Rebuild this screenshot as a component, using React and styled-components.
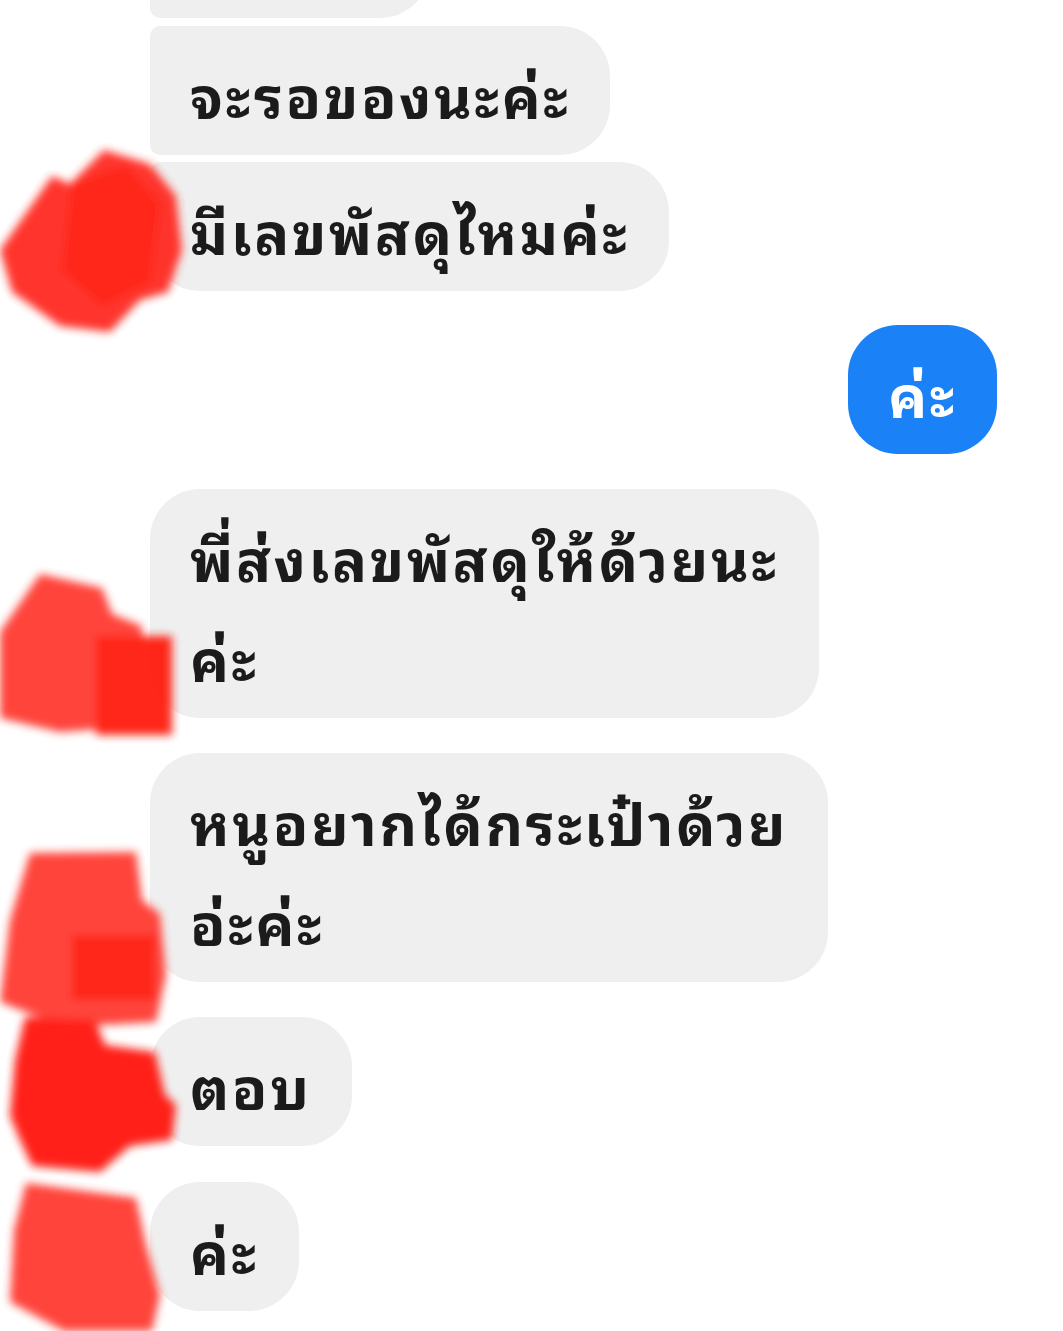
import React from "react";
import styled, { createGlobalStyle } from "styled-components";

const Global = createGlobalStyle`
    html, body {
        margin: 0;
        padding: 0;
        background: #ffffff;
    }
    body {
        font-family: "Noto Sans Thai Looped", "Noto Serif Thai", "Loma", "Garuda", "Tlwg Typo", "Sarabun", "Noto Sans Thai", "Noto Sans", sans-serif;
        overflow: hidden;
    }
`

const Screen = styled.div`
    position: relative;
    width: 1063px;
    height: 1331px;
    overflow: hidden;
    background: #ffffff;
`

const Feed = styled.div`
    display: flex;
    flex-direction: column;
    margin-top: -111px;
`

const Row = styled.div`
    display: flex;
    justify-content: ${p => p.mine ? "flex-end" : "flex-start"};
    padding-left: ${p => p.mine ? "0" : "150px"};
    padding-right: ${p => p.mine ? "66px" : "0"};
    margin-top: ${p => p.gap}px;
`

const Bubble = styled.div`
    box-sizing: border-box;
    min-height: 129px;
    min-width: ${p => p.w || 0}px;
    padding: 17px 40px 12px;
    border-radius: 50px;
    border-top-left-radius: ${p => p.tl || 50}px;
    border-bottom-left-radius: ${p => p.bl || 50}px;
    background: ${p => p.mine ? "#1a82f6" : "#efefef"};
    color: ${p => p.mine ? "#ffffff" : "#1b1b1b"};
    font-size: 58px;
    font-weight: 700;
    letter-spacing: 2.6px;
    line-height: 100px;
    white-space: nowrap;
`

const Line = styled.div``

const Redact = styled.svg`
    position: absolute;
    left: 0;
    top: 0;
    pointer-events: none;
`

const messages = [
    { lines: [""], gap: 0, w: 280, bl: 10 },
    { lines: ["จะรอของนะค่ะ"], gap: 8, tl: 10, bl: 10 },
    { lines: ["มีเลขพัสดุไหมค่ะ"], gap: 7, tl: 10 },
    { lines: ["ค่ะ"], gap: 34, mine: true },
    { lines: ["พี่ส่งเลขพัสดุให้ด้วยนะ", "ค่ะ"], gap: 35 },
    { lines: ["หนูอยากได้กระเป๋าด้วย", "อ่ะค่ะ"], gap: 35 },
    { lines: ["ตอบ"], gap: 35 },
    { lines: ["ค่ะ"], gap: 36 },
]

// red marker scribbles hiding the avatars
const blots = [
    { fill: "#ff2c24", pts: "0,250 52,176 70,184 104,150 150,164 176,196 182,250 168,292 140,300 110,332 60,326 12,292" },
    { fill: "#ff1a10", pts: "72,184 126,166 160,204 150,282 102,306 62,270" },
    { fill: "#ff3a30", pts: "0,632 40,574 102,588 112,614 142,626 142,726 60,732 0,718" },
    { fill: "#ff1a10", pts: "96,636 172,636 172,735 96,735" },
    { fill: "#ff3a30", pts: "30,853 136,852 142,900 160,914 166,975 156,1022 65,1027 0,1002 10,920" },
    { fill: "#ff1a10", pts: "72,935 155,935 155,1000 72,1000" },
    { fill: "#ff1408", pts: "25,1017 95,1020 105,1045 155,1052 165,1095 176,1105 172,1140 130,1146 100,1172 32,1166 20,1140 10,1116 15,1060" },
    { fill: "#ff3a30", pts: "26,1183 136,1198 146,1245 160,1295 152,1331 64,1331 10,1302 14,1230" },
]

export default function App () {
    return <Screen>
        <Global/>
        <Feed>
            {messages.map((m, i) => <Row key={i} mine={m.mine} gap={m.gap}>
                <Bubble mine={m.mine} w={m.w} tl={m.tl} bl={m.bl}>
                    {m.lines.map((l, j) => <Line key={j}>{l}</Line>)}
                </Bubble>
            </Row>)}
        </Feed>
        <Redact width="1063" height="1331" viewBox="0 0 1063 1331">
            <defs>
                <filter id="smear" x="-20%" y="-20%" width="140%" height="140%">
                    <feGaussianBlur stdDeviation="4"/>
                </filter>
            </defs>
            <g filter="url(#smear)" opacity="0.95">
                {blots.map((b, i) => <polygon key={i} points={b.pts} fill={b.fill}/>)}
            </g>
        </Redact>
    </Screen>
}
